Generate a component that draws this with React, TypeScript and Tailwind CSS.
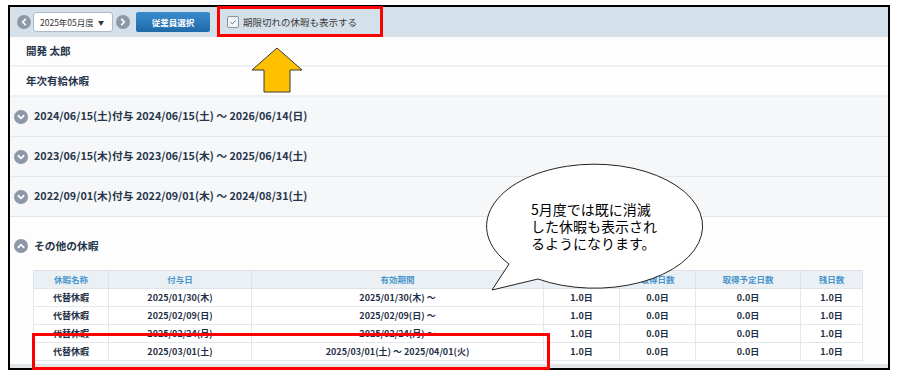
import React from 'react';

const grants = [
  '2024/06/15(土)付与 2024/06/15(土) ～ 2026/06/14(日)',
  '2023/06/15(木)付与 2023/06/15(木) ～ 2025/06/14(土)',
  '2022/09/01(木)付与 2022/09/01(木) ～ 2024/08/31(土)',
];

const rows = [
  { name: '代替休暇', date: '2025/01/30(木)', period: '2025/01/30(木) ～' },
  { name: '代替休暇', date: '2025/02/09(日)', period: '2025/02/09(日) ～' },
  { name: '代替休暇', date: '2025/02/24(月)', period: '2025/02/24(月) ～' },
  { name: '代替休暇', date: '2025/03/01(土)', period: '2025/03/01(土) ～ 2025/04/01(火)' },
];

const columns = [
  { label: '休暇名称', w: 75 },
  { label: '付与日', w: 143 },
  { label: '有効期間', w: 292 },
  { label: '付与日数', w: 76 },
  { label: '取得日数', w: 76 },
  { label: '取得予定日数', w: 105 },
  { label: '残日数', w: 62 },
];

function CircleChevron({ dir }: { dir: 'up' | 'down' | 'left' | 'right' }) {
  const d = {
    up: 'M4.3 8.3 L7 5.6 L9.7 8.3',
    down: 'M4.3 5.7 L7 8.4 L9.7 5.7',
    left: 'M8.3 4.3 L5.6 7 L8.3 9.7',
    right: 'M5.7 4.3 L8.4 7 L5.7 9.7',
  }[dir];
  return (
    <svg width="14" height="14" viewBox="0 0 14 14" className="shrink-0">
      <circle cx="7" cy="7" r="7" fill="#8c98a8" />
      <path d={d} stroke="#fff" strokeWidth="1.7" fill="none" strokeLinecap="round" strokeLinejoin="round" />
    </svg>
  );
}

export default function App() {
  return (
    <div className="relative w-[898px] h-[379px] bg-white overflow-hidden font-['Noto_Sans_CJK_JP',sans-serif]">
      <div className="ml-[8px] mt-[5px] w-[882px] h-[365px] border-2 border-black flex flex-col">
        {/* toolbar */}
        <div className="h-[30px] shrink-0 bg-[#d5e1ea] flex items-center pl-[7px]">
          <CircleChevron dir="left" />
          <div className="ml-[2px] w-[80px] h-[20px] bg-white border border-[#aebbc7] rounded-[3px] flex items-center pl-[6px] pr-[8px] text-[8.5px] text-[#333]">
            <span>2025年05月度</span>
            <span className="ml-auto text-[6px] text-[#333]">▼</span>
          </div>
          <div className="ml-[3px]">
            <CircleChevron dir="right" />
          </div>
          <div className="ml-[6px] w-[74px] h-[20px] rounded-[2px] bg-gradient-to-b from-[#3a8ccf] to-[#1f6aa9] flex items-center justify-center text-white text-[8.5px] font-bold">
            従業員選択
          </div>
          <div className="ml-[17px] w-[12px] h-[12px] rounded-[2px] border border-[#8796a5] bg-[#f2f5f8] flex items-center justify-center">
            <svg width="8" height="8" viewBox="0 0 8 8">
              <path d="M1.5 4.2 L3.3 5.8 L6.5 2.5" stroke="#6b7a89" strokeWidth="1" fill="none" />
            </svg>
          </div>
          <span className="ml-[4px] text-[9.5px] text-[#3a3a3a]">期限切れの休暇も表示する</span>
        </div>

        {/* employee */}
        <div className="h-[30px] shrink-0 bg-[#fdfdfd] border-b-2 border-[#eef1f3] flex items-center pl-[16px] text-[10.5px] font-bold text-[#26354a]">
          開発 太郎
        </div>
        <div className="h-[30px] shrink-0 bg-[#fdfdfd] border-b-2 border-[#eef1f3] flex items-center pl-[16px] text-[10.5px] font-bold text-[#26354a]">
          年次有給休暇
        </div>

        {grants.map((g) => (
          <div
            key={g}
            className="h-[40px] shrink-0 bg-[#f6f7f9] border-b border-[#e3e7eb] flex items-center pl-[4px] gap-[6px] text-[10.75px] font-bold text-[#26354a]"
          >
            <CircleChevron dir="down" />
            <span>{g}</span>
          </div>
        ))}

        {/* other leave */}
        <div className="flex-1 bg-[#fdfdfd] flex flex-col">
          <div className="mt-[21px] h-[16px] flex items-center pl-[4px] gap-[6px] text-[10.75px] font-bold text-[#26354a]">
            <CircleChevron dir="up" />
            <span>その他の休暇</span>
          </div>
          <table className="mt-[16px] ml-[23px] w-[829px] table-fixed border-collapse text-[9px] font-bold">
            <colgroup>
              {columns.map((c) => (
                <col key={c.label} style={{ width: c.w }} />
              ))}
            </colgroup>
            <thead>
              <tr className="h-[18px] bg-[#ebf0f4]">
                {columns.map((c) => (
                  <th key={c.label} className="border border-[#dde3e8] text-center font-bold text-[8.5px] text-[#4a97cc] p-0">
                    {c.label}
                  </th>
                ))}
              </tr>
            </thead>
            <tbody>
              {rows.map((r) => (
                <tr key={r.date} className="h-[18px] bg-white text-[#1f2f45]">
                  <td className="border border-[#e3e8ec] text-center p-0">{r.name}</td>
                  <td className="border border-[#e3e8ec] text-center p-0">{r.date}</td>
                  <td className="border border-[#e3e8ec] text-center p-0">{r.period}</td>
                  <td className="border border-[#e3e8ec] text-center p-0">1.0日</td>
                  <td className="border border-[#e3e8ec] text-center p-0">0.0日</td>
                  <td className="border border-[#e3e8ec] text-center p-0">0.0日</td>
                  <td className="border border-[#e3e8ec] text-center p-0">1.0日</td>
                </tr>
              ))}
            </tbody>
          </table>
          <div className="mt-auto h-[4px] bg-[#e3e6e9]" />
        </div>
      </div>

      {/* annotations */}
      <div className="absolute left-[217px] top-[6px] w-[166px] h-[31px] border-[3px] border-[#ff0000]" />
      <div className="absolute left-[32px] top-[333px] w-[518px] h-[37px] border-[3px] border-[#ff0000]" />

      <svg className="absolute left-0 top-0" width="898" height="379" viewBox="0 0 898 379">
        <polygon
          points="277,48 302,70 290,70 290,92 264,92 264,70 252,70"
          fill="#ffc000"
          stroke="#3a3a3a"
          strokeWidth="1"
        />
        <path
          d="M 509 264 L 492 290 L 538 279 A 108 62 0 1 0 509 264 Z"
          fill="#fff"
          stroke="#222"
          strokeWidth="1"
        />
      </svg>
      <div className="absolute left-[531px] top-[201px] text-[14px] leading-[17px] text-black font-normal">
        <div>5月度では既に消滅</div>
        <div>した休暇も表示され</div>
        <div>るようになります。</div>
      </div>
    </div>
  );
}
